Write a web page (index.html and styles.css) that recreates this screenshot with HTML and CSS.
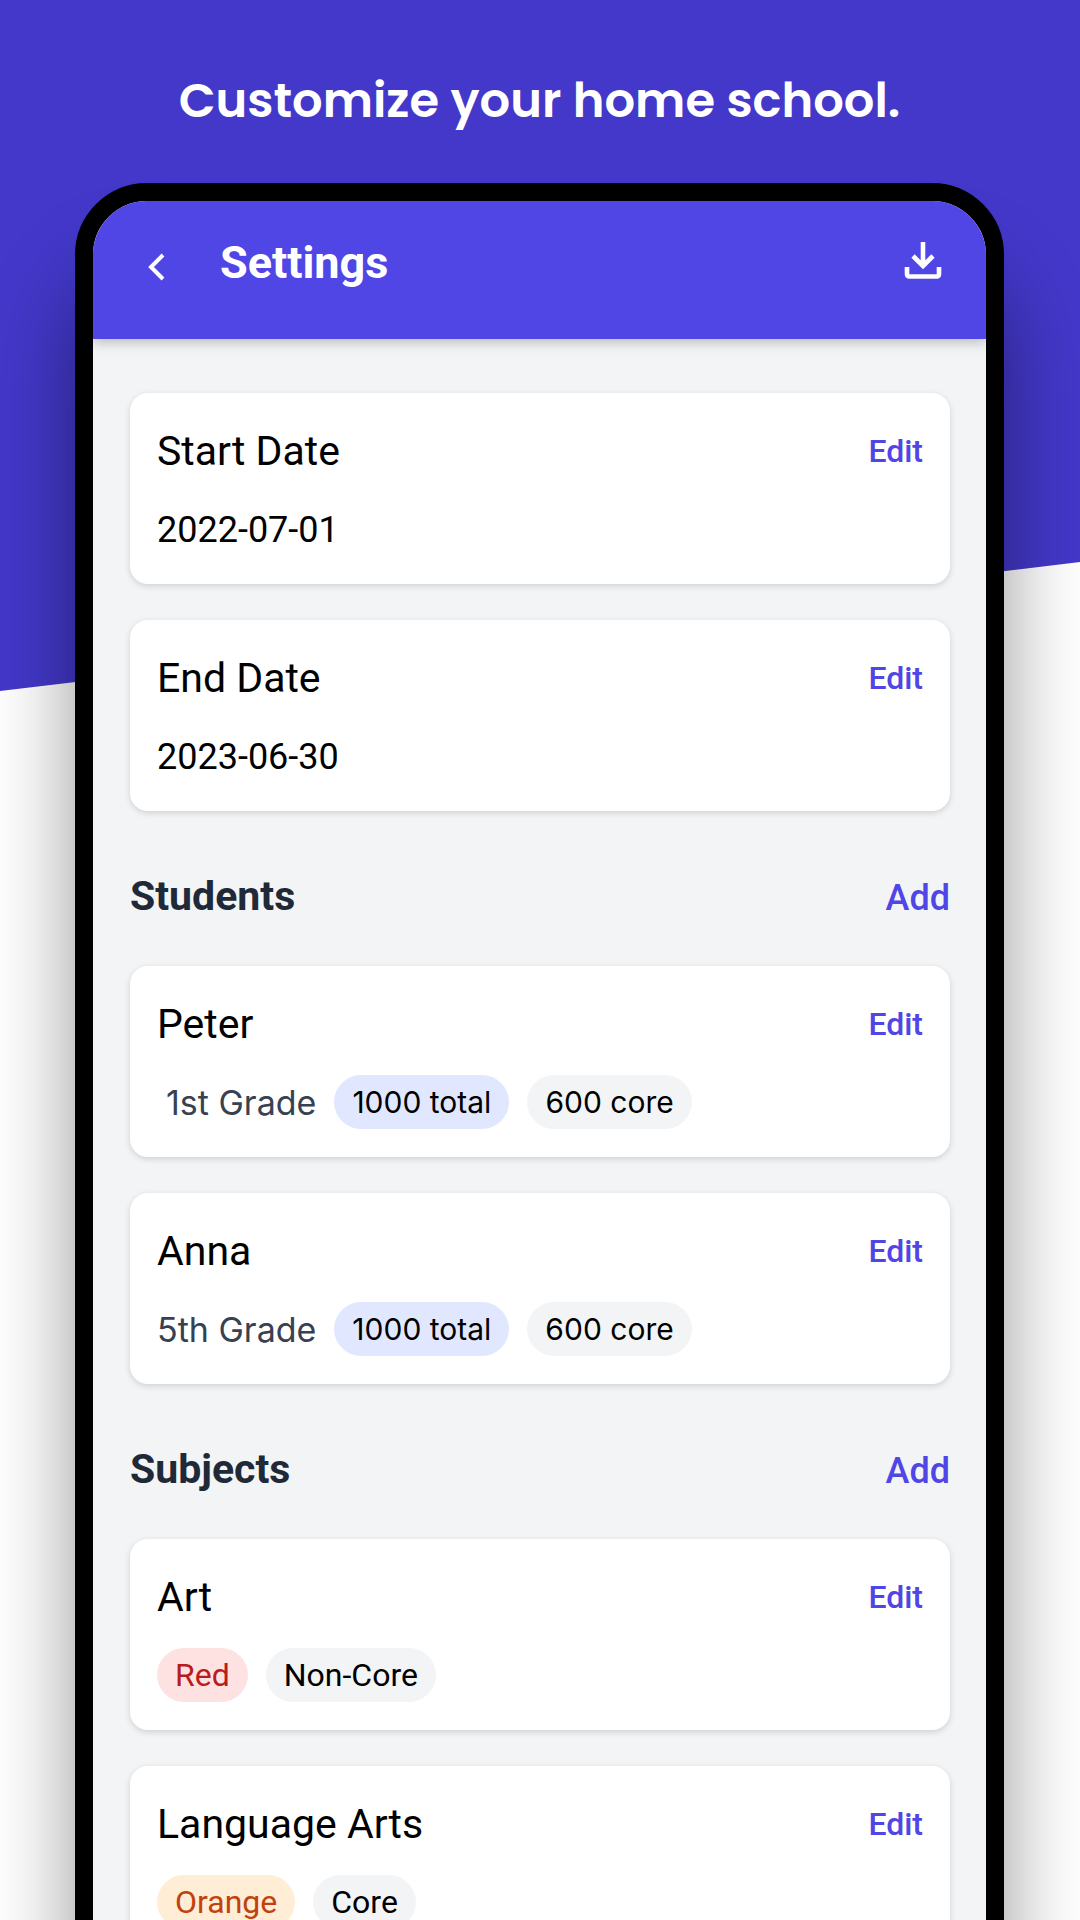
FILE: index.html
```html
<!DOCTYPE html>
<html lang="en">
<head>
<meta charset="utf-8">
<meta name="viewport" content="width=device-width, initial-scale=1">
<title>Settings</title>
<link rel="stylesheet" href="styles.css">
</head>
<body>
<div class="promo">
  <h1 class="headline">Customize your home school.</h1>
  <div class="phone">
    <header class="topbar">
      <button class="icon-button back" type="button" aria-label="Back">
        <svg class="icon-back" viewBox="0 0 18 28" fill="none" stroke="currentColor" stroke-width="4"><path d="M16 2 4 14l12 12"/></svg>
      </button>
      <h2 class="topbar-title">Settings</h2>
      <button class="icon-button download" type="button" aria-label="Download">
        <svg class="icon-download" viewBox="0 0 38 38" fill="none" stroke="currentColor" stroke-width="4.600"><path d="M19 0v24M9 14 19 24l10-10"/><path d="M3 25v7q0 2.500 2.500 2.500h27q2.500 0 2.500-2.500v-7"/></svg>
      </button>
    </header>
    <main class="content">
      <section class="cards">
        <article class="card">
          <div class="card-row"><h3 class="card-title">Start Date</h3><a class="edit" href="#">Edit</a></div>
          <p class="value">2022-07-01</p>
        </article>
        <article class="card">
          <div class="card-row"><h3 class="card-title">End Date</h3><a class="edit" href="#">Edit</a></div>
          <p class="value">2023-06-30</p>
        </article>
      </section>
      <div class="section-head"><h2 class="section-title">Students</h2><a class="add" href="#">Add</a></div>
      <section class="cards">
        <article class="card">
          <div class="card-row"><h3 class="card-title">Peter</h3><a class="edit" href="#">Edit</a></div>
          <div class="tags student"><span class="grade first">1st Grade</span><span class="pill indigo">1000 total</span><span class="pill">600 core</span></div>
        </article>
        <article class="card">
          <div class="card-row"><h3 class="card-title">Anna</h3><a class="edit" href="#">Edit</a></div>
          <div class="tags student"><span class="grade">5th Grade</span><span class="pill indigo">1000 total</span><span class="pill">600 core</span></div>
        </article>
      </section>
      <div class="section-head"><h2 class="section-title">Subjects</h2><a class="add" href="#">Add</a></div>
      <section class="cards">
        <article class="card">
          <div class="card-row"><h3 class="card-title">Art</h3><a class="edit" href="#">Edit</a></div>
          <div class="tags"><span class="pill red">Red</span><span class="pill">Non-Core</span></div>
        </article>
        <article class="card">
          <div class="card-row"><h3 class="card-title">Language Arts</h3><a class="edit" href="#">Edit</a></div>
          <div class="tags"><span class="pill orange">Orange</span><span class="pill">Core</span></div>
        </article>
      </section>
    </main>
  </div>
</div>
</body>
</html>
```
FILE: styles.css
```css
* { box-sizing: border-box; }

body {
  margin: 0;
  background: #fff;
  font-family: Roboto, sans-serif;
  color: #000;
}

h1, h2, h3, p { margin: 0; }
a { text-decoration: none; }

.promo {
  position: relative;
  isolation: isolate;
  height: 100vh;
  overflow: hidden;
  padding: 0 76px 0 75px;
}

.promo::before {
  content: "";
  position: absolute;
  inset: 0;
  z-index: -1;
  background: #4338ca;
  clip-path: polygon(0 0, 100% 0, 100% 562px, 0 691px);
}

.headline {
  padding-top: 65px;
  height: 183px;
  text-align: center;
  font: 600 48px/72px Poppins, Inter, sans-serif;
  color: #fff;
}

.phone {
  border: 18px solid #000;
  border-radius: 72px 72px 0 0;
  background: #f3f4f6;
  box-shadow: 0 90px 86px rgba(0, 0, 0, 0.42);
  overflow: hidden;
}

.topbar {
  display: flex;
  align-items: center;
  height: 138px;
  padding: 0 40px 14px 50px;
  background: #4f46e5;
  color: #fff;
  box-shadow: 0 3px 12px rgba(0, 0, 0, 0.25);
}

.icon-button {
  display: flex;
  padding: 4px;
  border: 0;
  background: none;
  color: inherit;
}

.icon-button.back { padding-top: 12px; }
.icon-button.download { padding-bottom: 8px; }

.icon-back { width: 18px; height: 28px; }
.icon-download { width: 38px; height: 38px; }

.topbar-title {
  flex: 1;
  padding-left: 51px;
  font-size: 45px;
  line-height: 56px;
  font-weight: 700;
}

.content { padding: 54px 36px 54px 37px; }

.cards { display: grid; gap: 36px; }

.card {
  height: 191px;
  padding: 32px 27px 0;
  border-radius: 18px;
  background: #fff;
  box-shadow: 0 2px 6px rgba(0, 0, 0, 0.15);
}

.card-row {
  display: flex;
  align-items: center;
  justify-content: space-between;
}

.card-title {
  font-size: 41px;
  line-height: 52px;
  font-weight: 400;
}

.edit { font-size: 32px; font-weight: 500; color: #4f46e5; }
.add { font-size: 36px; font-weight: 500; color: #4f46e5; }

.value {
  margin-top: 26px;
  font-size: 36px;
  line-height: 54px;
}

.section-head {
  display: flex;
  align-items: baseline;
  justify-content: space-between;
  height: 155px;
  padding-top: 59px;
}

.section-title {
  font-size: 41px;
  line-height: 52px;
  font-weight: 700;
  color: #1f2937;
}

.tags {
  display: flex;
  align-items: center;
  gap: 18px;
  margin-top: 25px;
}

.grade { font-size: 34px; color: #374151; }
.grade.first { padding-left: 9px; }

.pill {
  padding: 0 18px;
  border-radius: 27px;
  background: #f3f4f6;
  font-size: 32px;
  line-height: 54px;
}

.student { font-family: Inter, sans-serif; }
.student .pill { font-size: 30px; }

.pill.indigo { background: #e0e7ff; }
.pill.red { background: #fee2e2; color: #b91c1c; }
.pill.orange { background: #ffedd5; color: #c2410c; }
```
